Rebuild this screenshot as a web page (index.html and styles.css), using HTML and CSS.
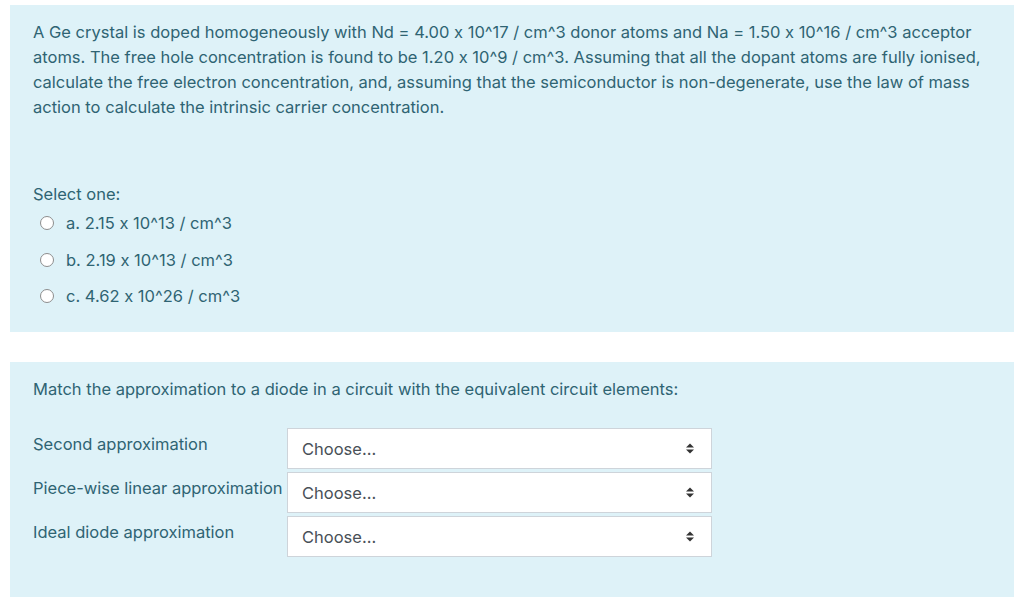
FILE: index.html
```
<!DOCTYPE html>
<html lang="en">

<head>
  <meta charset="UTF-8">
  <meta name="viewport" content="width=device-width, initial-scale=1.0">
  <title>Quiz</title>
  <link rel="stylesheet" href="styles.css">
</head>

<body>
  <div class="que">
    <div class="formulation">
      <div class="qtext">A Ge crystal is doped homogeneously with Nd = 4.00 x 10^17 / cm^3 donor atoms and Na = 1.50 x 10^16 / cm^3 acceptor atoms. The free hole concentration is found to be 1.20 x 10^9 / cm^3. Assuming that all the dopant atoms are fully ionised, calculate the free electron concentration, and, assuming that the semiconductor is non-degenerate, use the law of mass action to calculate the intrinsic carrier concentration.</div>
      <div class="ablock">
        <div class="prompt">Select one:</div>
        <div class="answer">
          <label class="option"><span class="radio"></span>a. 2.15 x 10^13 / cm^3</label>
          <label class="option"><span class="radio"></span>b. 2.19 x 10^13 / cm^3</label>
          <label class="option"><span class="radio"></span>c. 4.62 x 10^26 / cm^3</label>
        </div>
      </div>
    </div>
  </div>

  <div class="que">
    <div class="formulation match">
      <div class="qtext">Match the approximation to a diode in a circuit with the equivalent circuit elements:</div>
      <div class="pairs">
        <div class="pair">
          <span class="pair-label">Second approximation</span>
          <div class="select">Choose...
            <svg class="arrows" width="8" height="11" viewBox="0 0 8 11"><path d="M0 4.5 L4 0.5 L8 4.5 Z M0 6.5 L4 10.5 L8 6.5 Z" fill="#333"/></svg>
          </div>
        </div>
        <div class="pair">
          <span class="pair-label">Piece-wise linear approximation</span>
          <div class="select">Choose...
            <svg class="arrows" width="8" height="11" viewBox="0 0 8 11"><path d="M0 4.5 L4 0.5 L8 4.5 Z M0 6.5 L4 10.5 L8 6.5 Z" fill="#333"/></svg>
          </div>
        </div>
        <div class="pair">
          <span class="pair-label">Ideal diode approximation</span>
          <div class="select">Choose...
            <svg class="arrows" width="8" height="11" viewBox="0 0 8 11"><path d="M0 4.5 L4 0.5 L8 4.5 Z M0 6.5 L4 10.5 L8 6.5 Z" fill="#333"/></svg>
          </div>
        </div>
      </div>
    </div>
  </div>
</body>

</html>
```

FILE: styles.css
```
body {
  margin: 0;
  padding: 5px 10px;
  font-family: Inter, "Liberation Sans", sans-serif;
  font-size: 16.5px;
  font-feature-settings: "calt" 0;
  color: #2f6473;
  background-color: #fff;
}

.que {
  margin-bottom: 30px;
}

.formulation {
  background-color: #def2f8;
  padding: 15px 23px 17px;
}

.qtext {
  line-height: 25px;
}

.ablock {
  margin-top: 63px;
}

.prompt {
  line-height: 22px;
}

.option {
  display: flex;
  align-items: center;
  height: 36.5px;
  padding-left: 7px;
}

.radio {
  width: 12px;
  height: 12px;
  border: 1px solid #8d8d8d;
  border-radius: 50%;
  background-color: #fff;
  margin-right: 12px;
}

.match {
  padding: 15px 23px 40px;
}

.pairs {
  margin-top: 26px;
  display: flex;
  flex-direction: column;
  gap: 3px;
}

.pair {
  display: grid;
  grid-template-columns: 254px 425px;
  align-items: start;
}

.pair-label {
  line-height: 25px;
  padding-top: 4px;
  white-space: nowrap;
}

.select {
  height: 41px;
  box-sizing: border-box;
  border: 1px solid #ced4da;
  background-color: #fff;
  color: #495057;
  display: flex;
  align-items: center;
  justify-content: space-between;
  padding: 1px 17px 0 14px;
}

.arrows {
  display: block;
}
```
